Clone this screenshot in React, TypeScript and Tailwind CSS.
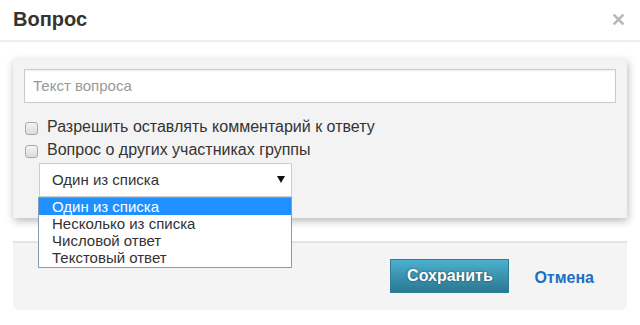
import React from "react";

const font = { fontFamily: '"Liberation Sans", Arial, sans-serif' };

function Checkbox() {
  return (
    <span className="inline-block w-[13px] h-[13px] rounded-[3px] border border-[#a9a9a9] bg-gradient-to-b from-[#f4f4f4] to-[#dcdcdc] shrink-0" />
  );
}

export default function App() {
  return (
    <div
      className="relative w-[640px] h-[325px] bg-white overflow-hidden text-[#333]"
      style={font}
    >
      {/* Header */}
      <div className="h-[42px] flex items-center justify-between pl-[13px] pr-[16px] border-b-2 border-[#eeeeee]">
        <h1 className="text-[20px] font-bold leading-[24px] text-[#333] -mt-[2px]">Вопрос</h1>
        <svg width="11" height="11" viewBox="0 0 11 11" className="-mt-[2px]">
          <path d="M1.5 1.5 L9.5 9.5 M9.5 1.5 L1.5 9.5" stroke="#b9b9b9" strokeWidth="2.6" strokeLinecap="square" />
        </svg>
      </div>

      <div className="px-[13px]">
        {/* Card */}
        <div className="mt-[17px] h-[159px] bg-[#f3f3f3] shadow-[1px_3px_8px_rgba(0,0,0,0.28)] px-[11px] pt-[10px]">
          <div className="h-[34px] border border-[#cccccc] bg-white shadow-[inset_0_1px_2px_rgba(0,0,0,0.08)] flex items-center px-[8px]">
            <span className="text-[15px] text-[#999]">Текст вопроса</span>
          </div>
          <div className="mt-[14px] flex items-center gap-[9px] h-[23px] pl-[1px]">
            <Checkbox />
            <span className="text-[16px] leading-[23px] text-[#333] -mt-[5px]">Разрешить оставлять комментарий к ответу</span>
          </div>
          <div className="flex items-center gap-[9px] h-[23px] pl-[1px]">
            <Checkbox />
            <span className="text-[16px] leading-[23px] text-[#333] -mt-[5px]">Вопрос о других участниках группы</span>
          </div>
          <div className="ml-[15px] w-[253px] h-[34px] border border-[#cccccc] bg-white flex items-center justify-between pl-[12px] pr-[6px]">
            <span className="text-[15px] text-[#333]">Один из списка</span>
            <svg width="8" height="7" viewBox="0 0 8 7" className="-mt-[1px]">
              <path d="M0 0 H8 L4 7 Z" fill="#111" />
            </svg>
          </div>
        </div>

        {/* Footer */}
        <div className="mt-[23px] h-[69px] bg-[#f4f4f4] border-t-2 border-[#e4e4e4] rounded-b-[6px] flex items-start justify-end pt-[16px] pr-[33px] gap-[25px]">
          <button className="w-[119px] h-[34px] border border-[#2b7f99] bg-gradient-to-b from-[#4cb0cf] to-[#2b7891] text-white text-[16px] font-bold [text-shadow:0_0_2px_rgba(0,40,60,0.8)]">
            Сохранить
          </button>
          <span className="mt-[7px] text-[16px] font-bold text-[#1a6fc4]">Отмена</span>
        </div>
      </div>

      {/* Open dropdown list */}
      <div className="absolute left-[38px] top-[197px] w-[254px] h-[71px] border border-[#7f9db9] bg-white">
        <div className="h-[17px] bg-[#1e90ff] text-white text-[15px] leading-[17px] pl-[13px]">Один из списка</div>
        <div className="h-[17px] text-[#333] text-[15px] leading-[17px] pl-[13px]">Несколько из списка</div>
        <div className="h-[17px] text-[#333] text-[15px] leading-[17px] pl-[13px]">Числовой ответ</div>
        <div className="h-[17px] text-[#333] text-[15px] leading-[17px] pl-[13px]">Текстовый ответ</div>
      </div>
    </div>
  );
}
